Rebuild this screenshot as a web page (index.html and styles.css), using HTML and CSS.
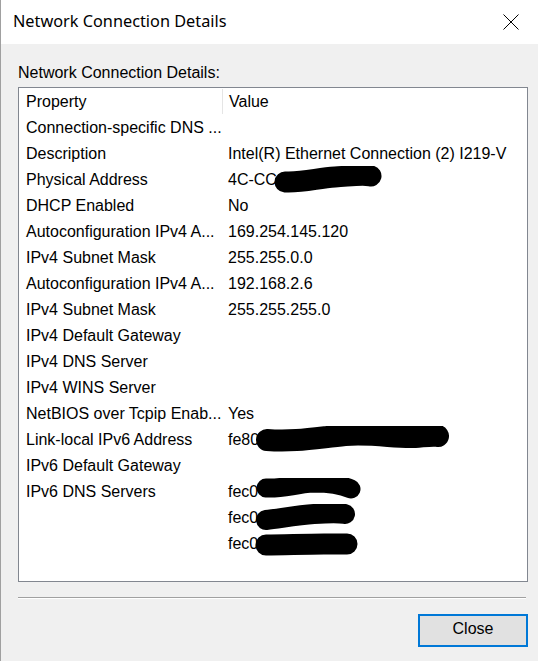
FILE: index.html
```html
<!DOCTYPE html>
<html lang="en">
<head>
    <meta charset="UTF-8">
    <title>Network Connection Details</title>
    <link rel="stylesheet" href="styles.css">
</head>
<body>
    <div class="window">
        <div class="titlebar">
            <span class="title">Network Connection Details</span>
            <button class="close-x" aria-label="Close">
                <svg width="16" height="16" viewBox="0 0 16 16">
                    <path d="M0.5 0.5 L15.5 15.5 M15.5 0.5 L0.5 15.5" stroke="#000" stroke-width="1" fill="none"/>
                </svg>
            </button>
        </div>
        <div class="content">
            <div class="caption">Network Connection Details:</div>
            <div class="listview">
                <div class="row header">
                    <div class="cell prop">Property</div>
                    <div class="cell value">Value</div>
                </div>
                <div class="row"><div class="cell prop">Connection-specific DNS ...</div><div class="cell value"></div></div>
                <div class="row"><div class="cell prop">Description</div><div class="cell value">Intel(R) Ethernet Connection (2) I219-V</div></div>
                <div class="row">
                    <div class="cell prop">Physical Address</div>
                    <div class="cell value">4C-CC<svg class="scribble" width="110" height="28" viewBox="0 0 110 28"><path d="M12 16 C30 17 45 12 62 11 C78 10 90 8 98 10" stroke="#000" stroke-width="21" stroke-linecap="round" fill="none"/></svg></div>
                </div>
                <div class="row"><div class="cell prop">DHCP Enabled</div><div class="cell value">No</div></div>
                <div class="row"><div class="cell prop">Autoconfiguration IPv4 A...</div><div class="cell value">169.254.145.120</div></div>
                <div class="row"><div class="cell prop">IPv4 Subnet Mask</div><div class="cell value">255.255.0.0</div></div>
                <div class="row"><div class="cell prop">Autoconfiguration IPv4 A...</div><div class="cell value">192.168.2.6</div></div>
                <div class="row"><div class="cell prop">IPv4 Subnet Mask</div><div class="cell value">255.255.255.0</div></div>
                <div class="row"><div class="cell prop">IPv4 Default Gateway</div><div class="cell value"></div></div>
                <div class="row"><div class="cell prop">IPv4 DNS Server</div><div class="cell value"></div></div>
                <div class="row"><div class="cell prop">IPv4 WINS Server</div><div class="cell value"></div></div>
                <div class="row"><div class="cell prop">NetBIOS over Tcpip Enab...</div><div class="cell value">Yes</div></div>
                <div class="row">
                    <div class="cell prop">Link-local IPv6 Address</div>
                    <div class="cell value">fe80<svg class="scribble" width="196" height="28" viewBox="0 0 196 28"><path d="M12 14 C40 16 60 12 90 9 C120 7 140 12 160 11 C172 10 178 9 183 10" stroke="#000" stroke-width="22" stroke-linecap="round" fill="none"/></svg></div>
                </div>
                <div class="row"><div class="cell prop">IPv6 Default Gateway</div><div class="cell value"></div></div>
                <div class="row">
                    <div class="cell prop">IPv6 DNS Servers</div>
                    <div class="cell value">fec0<svg class="scribble" width="110" height="28" viewBox="0 0 110 28"><path d="M12 10 C30 11 40 6 60 5 C78 5 90 8 97 11" stroke="#000" stroke-width="19" stroke-linecap="round" fill="none"/></svg></div>
                </div>
                <div class="row">
                    <div class="cell prop"></div>
                    <div class="cell value">fec0<svg class="scribble" width="104" height="28" viewBox="0 0 104 28"><path d="M12 16 C28 14 45 11 60 10 C75 9 86 9 91 10" stroke="#000" stroke-width="20" stroke-linecap="round" fill="none"/></svg></div>
                </div>
                <div class="row">
                    <div class="cell prop"></div>
                    <div class="cell value">fec0<svg class="scribble" width="106" height="28" viewBox="0 0 106 28"><path d="M12 15 C30 15 50 14 70 14 C82 14 89 14 93 14" stroke="#000" stroke-width="21" stroke-linecap="round" fill="none"/></svg></div>
                </div>
            </div>
            <hr class="separator">
            <div class="buttons">
                <button class="btn default">Close</button>
            </div>
        </div>
    </div>
</body>
</html>
```

FILE: styles.css
```css
html, body {
    margin: 0;
    padding: 0;
}
body {
    width: 538px;
    height: 661px;
    background: #f0f0f0;
    font-family: "Liberation Sans", Arial, sans-serif;
    color: #000;
    overflow: hidden;
}
.window {
    height: 661px;
    border-left: 1px solid #a0a0a0;
    box-sizing: border-box;
}
.titlebar {
    height: 44px;
    background: #fff;
    display: flex;
    align-items: center;
    justify-content: space-between;
    padding-left: 12px;
}
.title {
    font-family: "Noto Sans", sans-serif;
    font-size: 16.3px;
    padding-bottom: 2px;
}
.close-x {
    width: 46px;
    height: 44px;
    border: none;
    background: transparent;
    padding: 0;
    display: flex;
    align-items: center;
    justify-content: center;
    margin-right: 4px;
}
.content {
    padding: 0 10px 0 17px;
}
.caption {
    font-size: 16px;
    margin-top: 20px;
    height: 23px;
}
.listview {
    background: #fff;
    border: 1px solid #828790;
    height: 493px;
    font-size: 16px;
}
.row {
    display: flex;
    height: 26px;
    align-items: center;
}
.cell {
    white-space: nowrap;
    display: flex;
    align-items: center;
    height: 26px;
    padding-top: 2px;
    box-sizing: border-box;
}
.prop {
    width: 203px;
    padding-left: 7px;
}
.value {
    padding-left: 6px;
}
.header .value {
    border-left: 1px solid #e5e5e5;
    height: 25px;
}
.scribble {
    display: block;
    margin-left: -4px;
}
.separator {
    margin: 15px 2px 0 0;
    border: none;
    border-top: 1px solid #a0a0a0;
    border-bottom: 1px solid #fff;
}
.buttons {
    display: flex;
    justify-content: flex-end;
    margin-top: 15px;
}
.btn {
    width: 110px;
    height: 33px;
    padding: 0 0 3px;
    font-family: "Liberation Sans", Arial, sans-serif;
    font-size: 16px;
    color: #000;
    background: #e1e1e1;
    border: 1px solid #adadad;
}
.btn.default {
    border: 2px solid #0078d7;
}
```
